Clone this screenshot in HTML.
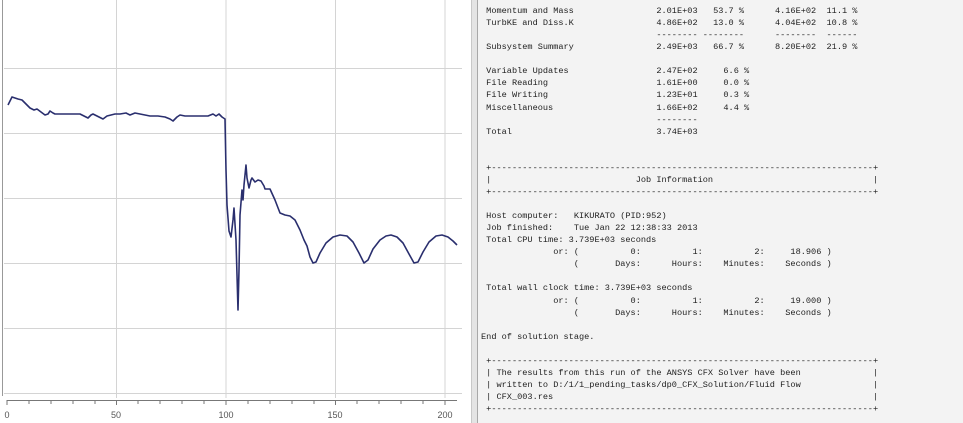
<!DOCTYPE html>
<html><head><meta charset="utf-8"><style>
html,body{margin:0;padding:0;width:963px;height:423px;overflow:hidden;background:#fff}
#r{position:absolute;left:477px;top:0;width:486px;height:423px;background:#f3f3f3;border-left:1px solid #a8a8a8}
#sep{position:absolute;left:471px;top:0;width:5px;height:423px;background:#e4e4e4;border-left:1px solid #c8c8c8}
pre{position:absolute;left:481px;top:5px;margin:0;font-family:"Liberation Mono",monospace;font-size:8.6px;line-height:12.06px;color:#1e1e1e}
</style></head><body>
<svg width="471" height="423" style="position:absolute;left:0;top:0">
<g stroke="#d4d4d4" stroke-width="1">
<line x1="4" y1="68.5" x2="462" y2="68.5"/><line x1="4" y1="133.5" x2="462" y2="133.5"/><line x1="4" y1="198.5" x2="462" y2="198.5"/><line x1="4" y1="263.5" x2="462" y2="263.5"/><line x1="4" y1="328.5" x2="462" y2="328.5"/><line x1="4" y1="393.5" x2="462" y2="393.5"/>
<line x1="116.5" y1="0" x2="116.5" y2="398"/><line x1="226" y1="0" x2="226" y2="398"/><line x1="335.5" y1="0" x2="335.5" y2="398"/><line x1="445" y1="0" x2="445" y2="398"/>
</g>
<line x1="2.5" y1="0" x2="2.5" y2="396" stroke="#999"/>
<line x1="7" y1="400.5" x2="457" y2="400.5" stroke="#777"/>
<g stroke="#777"><path d="M7 400v5M29 400v4M51 400v4M73 400v4M95 400v4M116.5 400v5M138 400v4M160 400v4M182 400v4M204 400v4M226 400v5M248 400v4M270 400v4M292 400v4M314 400v4M335.5 400v5M357 400v4M379 400v4M401 400v4M423 400v4M445 400v5"/></g>
<g font-family="Liberation Sans,sans-serif" font-size="9" fill="#555" text-anchor="middle">
<text x="7" y="418">0</text><text x="116" y="418">50</text><text x="226" y="418">100</text><text x="335" y="418">150</text><text x="445" y="418">200</text></g>
<path fill="none" stroke="#2a2f6e" stroke-width="1.6" stroke-linejoin="round" d="M8 105L12 97L18 99L22 100L26 104L30 108L34 110L37 109L41 112L45 115L48 114L50 111L53 113L55 114L62 114L70 114L80 114L84 116L88 118L91 115L93 114L97 116L103 119L107 116L115 114L120 114L126 113L130 115L135 113L140 114L145 115L150 116L158 116L165 117L170 119L173 121L177 117L180 115L185 116L192 116L200 116L208 116L213 114L216 116L219 114L222 117L225 119L226 170L227 205L229 231L231 237L233 220L234 208L236 240L238 310L239 270L240 215L242 190L243 200L244 185L246 165L247 178L249 188L251 180L252 178L255 182L258 180L261 181L264 186L265 189L270 189L275 200L280 213L285 215L290 216L295 220L300 230L304 240L307 246L310 257L313 263L316 262L320 253L326 243L333 237L340 235L347 236L353 242L359 253L364 263L368 260L373 249L380 240L386 236L391 235L397 237L403 243L409 254L414 263L418 262L423 252L429 242L436 236L442 235L448 237L453 241L457 245"/>
</svg>
<div id="sep"></div>
<div id="r"></div>
<pre> Momentum and Mass                2.01E+03   53.7 %      4.16E+02  11.1 %
 TurbKE and Diss.K                4.86E+02   13.0 %      4.04E+02  10.8 %
                                  -------- --------      --------  ------
 Subsystem Summary                2.49E+03   66.7 %      8.20E+02  21.9 %

 Variable Updates                 2.47E+02     6.6 %
 File Reading                     1.61E+00     0.0 %
 File Writing                     1.23E+01     0.3 %
 Miscellaneous                    1.66E+02     4.4 %
                                  --------
 Total                            3.74E+03


 +--------------------------------------------------------------------------+
 |                            Job Information                               |
 +--------------------------------------------------------------------------+

 Host computer:   KIKURATO (PID:952)
 Job finished:    Tue Jan 22 12:38:33 2013
 Total CPU time: 3.739E+03 seconds
              or: (          0:          1:          2:     18.906 )
                  (       Days:      Hours:    Minutes:    Seconds )

 Total wall clock time: 3.739E+03 seconds
              or: (          0:          1:          2:     19.000 )
                  (       Days:      Hours:    Minutes:    Seconds )

End of solution stage.

 +--------------------------------------------------------------------------+
 | The results from this run of the ANSYS CFX Solver have been              |
 | written to D:/1/1_pending_tasks/dp0_CFX_Solution/Fluid Flow              |
 | CFX_003.res                                                              |
 +--------------------------------------------------------------------------+</pre>
</body></html>
